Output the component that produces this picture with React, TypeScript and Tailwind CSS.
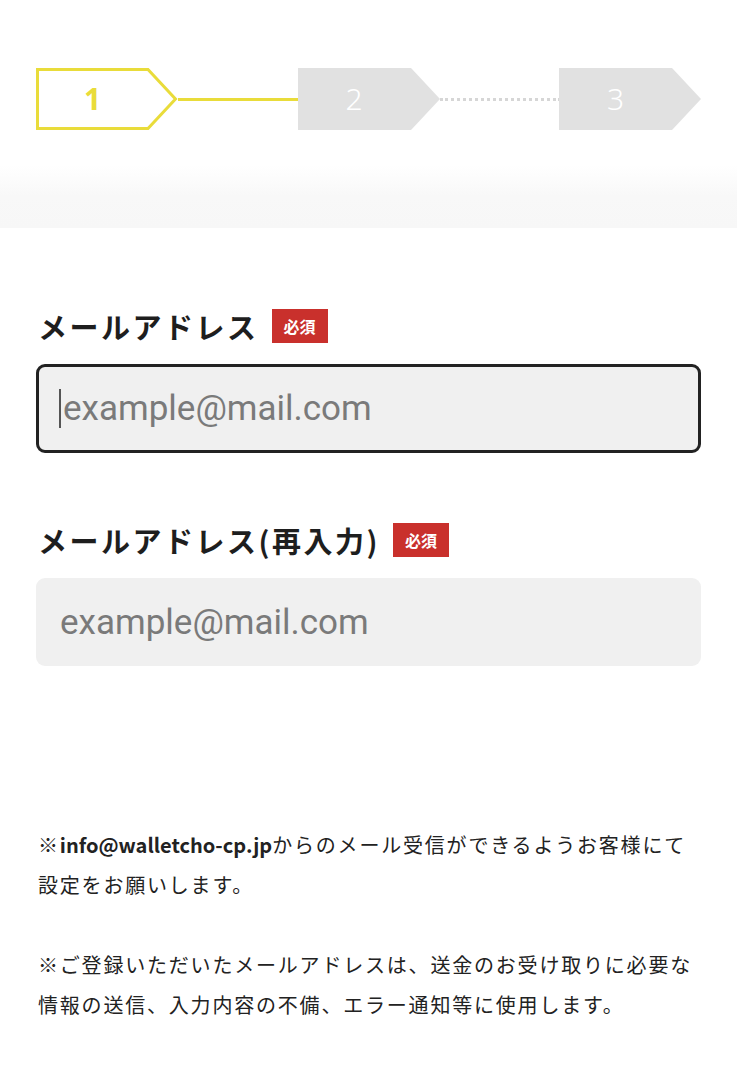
import React from "react";

const YELLOW = "#e9dc3a";

function Step({ num, active }: { num: number; active?: boolean }) {
  return (
    <div className="relative h-[62px] w-[142px] shrink-0">
      <svg width="142" height="62" viewBox="0 0 142 62" className="absolute inset-0">
        {active ? (
          <polygon
            points="1.5,1.5 112,1.5 139.5,31 112,60.5 1.5,60.5"
            fill="#ffffff"
            stroke={YELLOW}
            strokeWidth="3"
            strokeLinejoin="miter"
          />
        ) : (
          <polygon points="0,0 113,0 142,31 113,62 0,62" fill="#e1e1e1" />
        )}
      </svg>
      <div className="relative flex h-full w-[113px] items-center justify-center">
        <span
          className={
            active
              ? "text-[30px] font-bold leading-none text-[#e9dc3a]"
              : "text-[30px] font-light leading-none text-white"
          }
          style={{ fontFamily: "'Noto Sans', sans-serif" }}
        >
          {num}
        </span>
      </div>
    </div>
  );
}

function Label({ text }: { text: string }) {
  return (
    <div className="flex h-[36px] items-center gap-[13px]">
      <span className="text-[29px] font-bold leading-none tracking-[2.5px] text-[#1e1e1e]">{text}</span>
      <span className="flex h-[34px] w-[56px] items-center justify-center bg-[#c9302c] text-[16px] font-bold text-white">
        必須
      </span>
    </div>
  );
}

export default function App() {
  return (
    <div
      className="min-h-[1076px] w-full bg-white"
      style={{ fontFamily: "'Noto Sans CJK JP', 'Noto Sans', sans-serif" }}
    >
      {/* Steps */}
      <div className="flex items-center px-[36px] pt-[68px]">
        <Step num={1} active />
        <div className="h-[3px] flex-1 bg-[#e9dc3a]" />
        <div className="-ml-[2px]">
          <Step num={2} />
        </div>
        <div className="h-0 flex-1 border-t-[3px] border-dotted border-[#d6d6d6]" />
        <div className="-ml-[2px]">
          <Step num={3} />
        </div>
      </div>

      {/* faint band above card */}
      <div className="mt-[35px] h-[63px] bg-gradient-to-b from-white via-[#f8f8f8] to-[#f7f7f7]" />

      {/* Form card */}
      <div className="rounded-t-[10px] bg-white px-[36px] pt-[80px] pb-[60px]">
        <div className="pl-[2px]">
          <Label text="メールアドレス" />
        </div>
        <div className="relative mt-[20px]">
          <input
            type="email"
            placeholder="example@mail.com"
            className="h-[89px] w-full rounded-[9px] border-[3px] border-[#222222] bg-[#f0f0f0] pl-[24px] text-[35px] text-[#333] outline-none placeholder:text-[#7a7a7a]"
            style={{ fontFamily: "Roboto, sans-serif" }}
          />
          <span className="absolute top-[25px] left-[23px] h-[39px] w-[2px] bg-[#555555]" />
        </div>

        <div className="mt-[69px] pl-[2px]">
          <Label text="メールアドレス(再入力)" />
        </div>
        <input
          type="email"
          placeholder="example@mail.com"
          className="mt-[20px] h-[88px] w-full rounded-[9px] bg-[#f0f0f0] pl-[24px] text-[35px] text-[#333] outline-none placeholder:text-[#7a7a7a]"
          style={{ fontFamily: "Roboto, sans-serif" }}
        />

        <div className="mt-[159px] pl-[2px] text-[20px] leading-[40px] tracking-[1.8px] text-[#222222]">
          <p>
            ※<span className="font-bold tracking-normal">info@walletcho-cp.jp</span>からのメール受信ができるようお客様にて
            <br />
            設定をお願いします。
          </p>
          <p className="mt-[40px]">
            ※ご登録いただいたメールアドレスは、送金のお受け取りに必要な
            <br />
            情報の送信、入力内容の不備、エラー通知等に使用します。
          </p>
        </div>
      </div>
    </div>
  );
}
